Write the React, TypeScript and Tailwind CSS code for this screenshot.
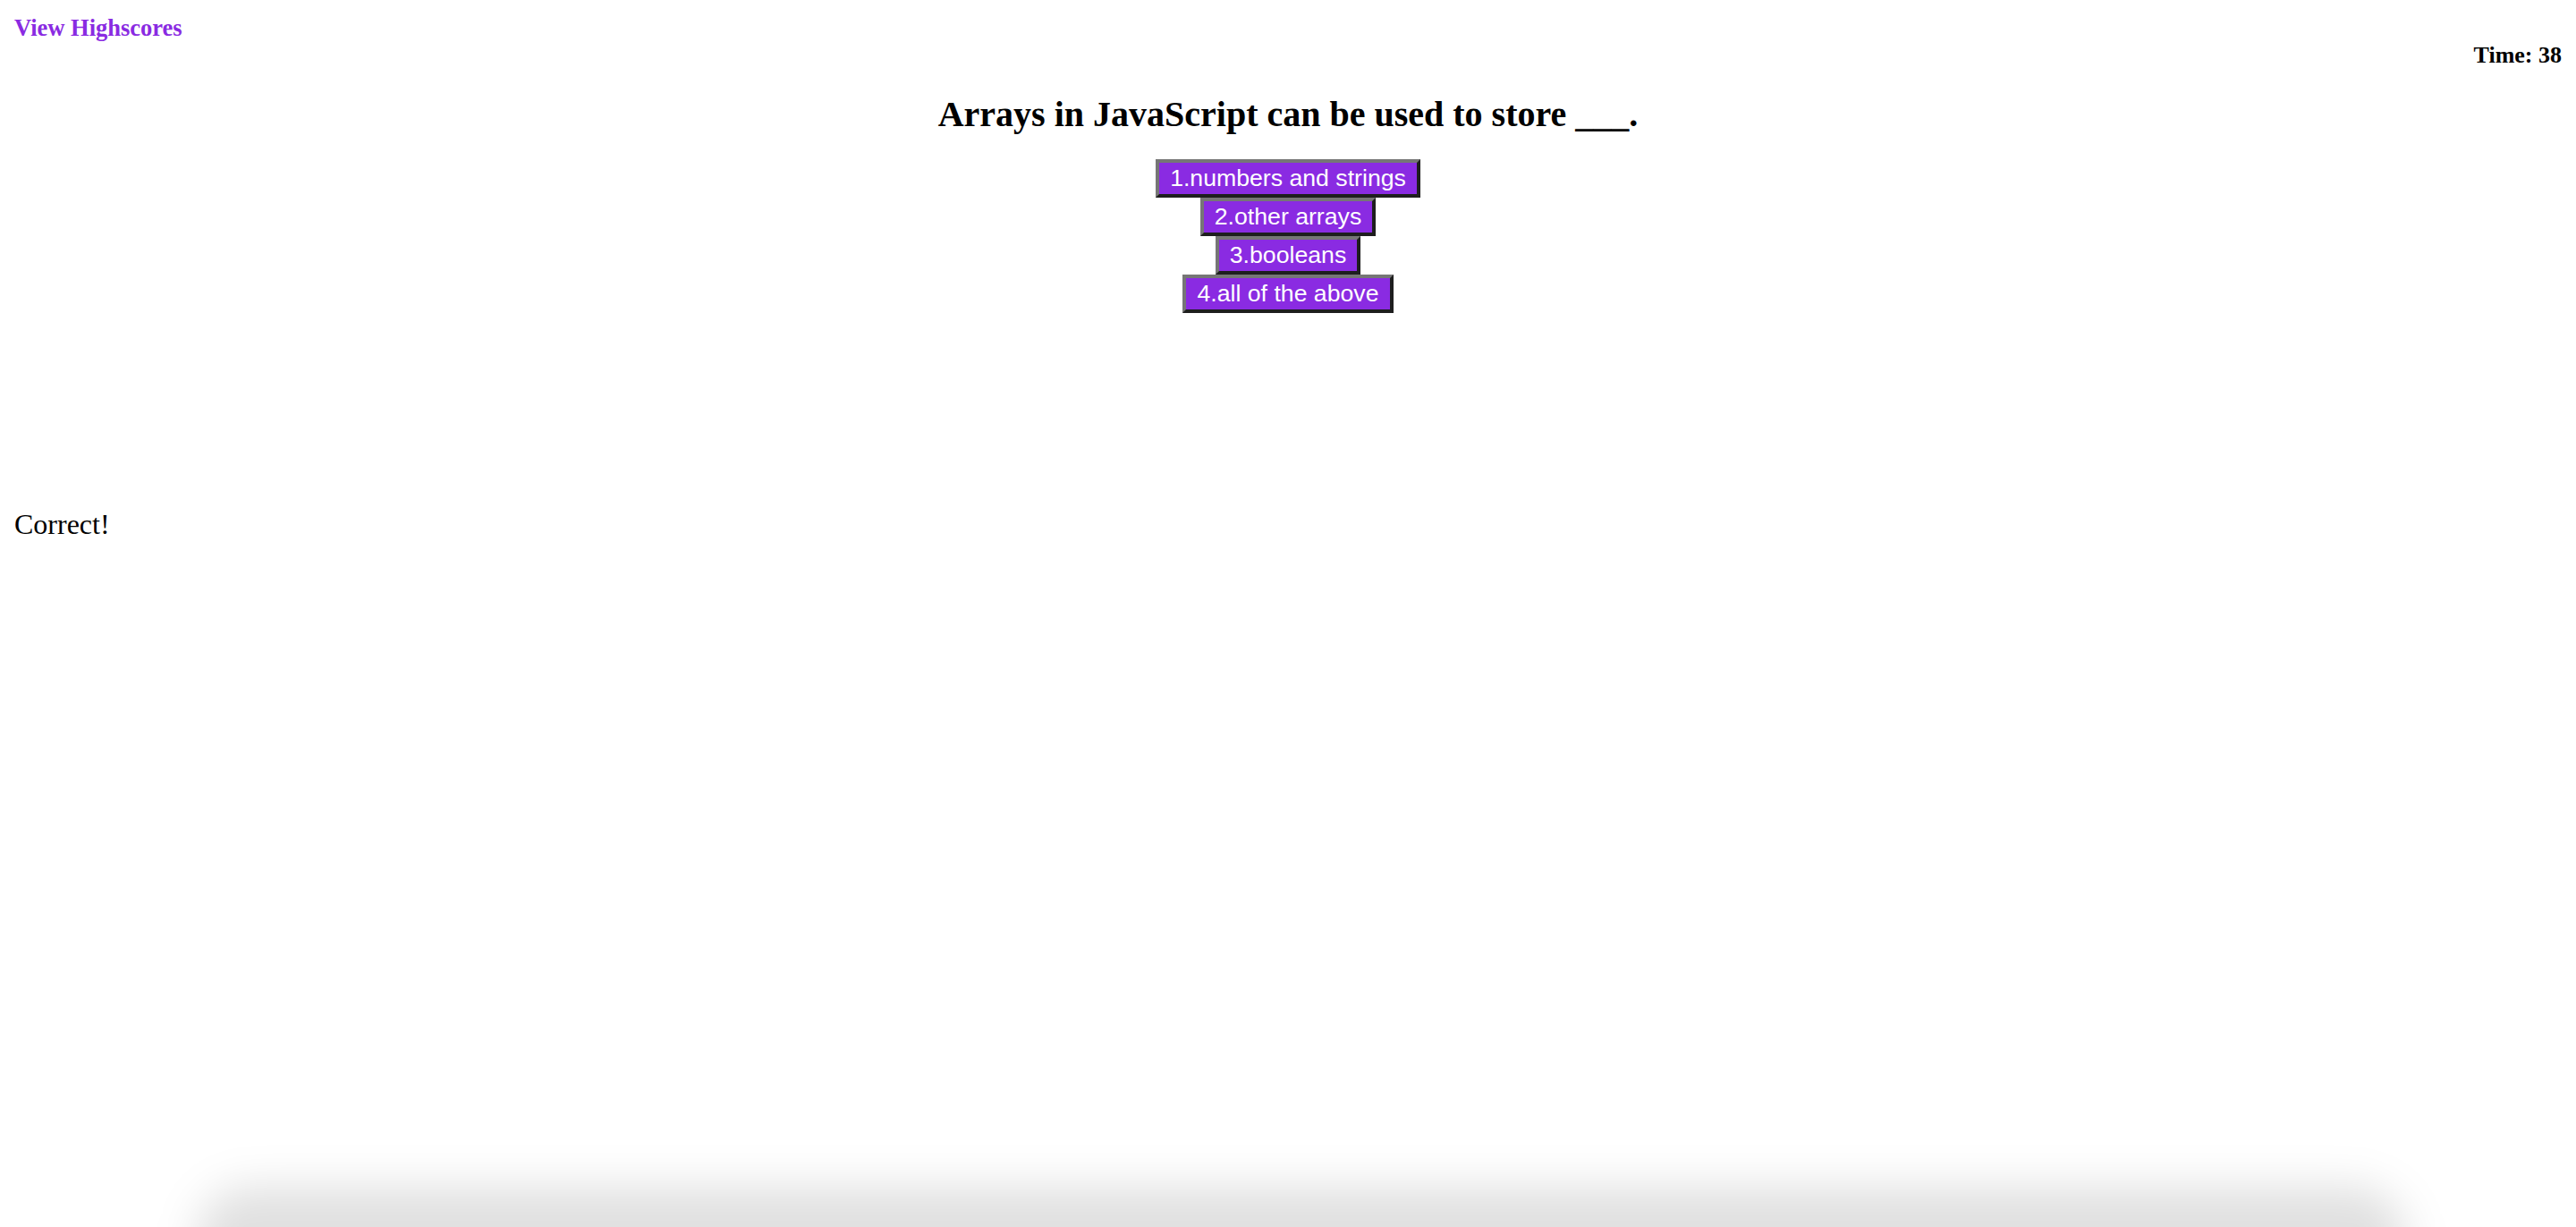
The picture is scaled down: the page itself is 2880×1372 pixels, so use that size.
import React from 'react';

const answers = ['1.numbers and strings', '2.other arrays', '3.booleans', '4.all of the above'];

export default function App() {
    return (
        <div className="relative min-h-screen overflow-hidden bg-white font-['Liberation_Serif',serif] text-black">
            <div className="p-[16px]">
                {/* Header */}
                <header>
                    <a href="#" className="block text-[26.5px] font-bold leading-[30px] text-[#8a2be2]">
                        View Highscores
                    </a>
                    <div className="pt-[1px] text-right text-[26px] font-bold leading-[30px]">Time: 38</div>
                </header>

                {/* Question */}
                <main className="text-center">
                    <h1 className="mt-[28px] mb-[27px] text-[40px] font-bold leading-[46px]">
                        Arrays in JavaScript can be used to store ___.
                    </h1>
                    <div className="flex flex-col items-center">
                        {answers.map((answer) => (
                            <button
                                key={answer}
                                className="h-[43px] border-[4px] border-solid border-t-[#767676] border-l-[#767676] border-b-[#1e1e1e] border-r-[#1e1e1e] bg-[#8a2be2] px-[12px] font-['Liberation_Sans',Arial,sans-serif] text-[26.67px] leading-[30.67px] text-white"
                            >
                                {answer}
                            </button>
                        ))}
                    </div>
                </main>

                {/* Result */}
                <p className="mt-[218px] text-[32px] leading-[37px]">Correct!</p>
            </div>

            {/* bottom shadow */}
            <div className="pointer-events-none absolute bottom-[-100px] left-[220px] right-[190px] h-[145px] rounded-[60px] bg-black/[0.12] blur-[24px]" />
        </div>
    );
}
